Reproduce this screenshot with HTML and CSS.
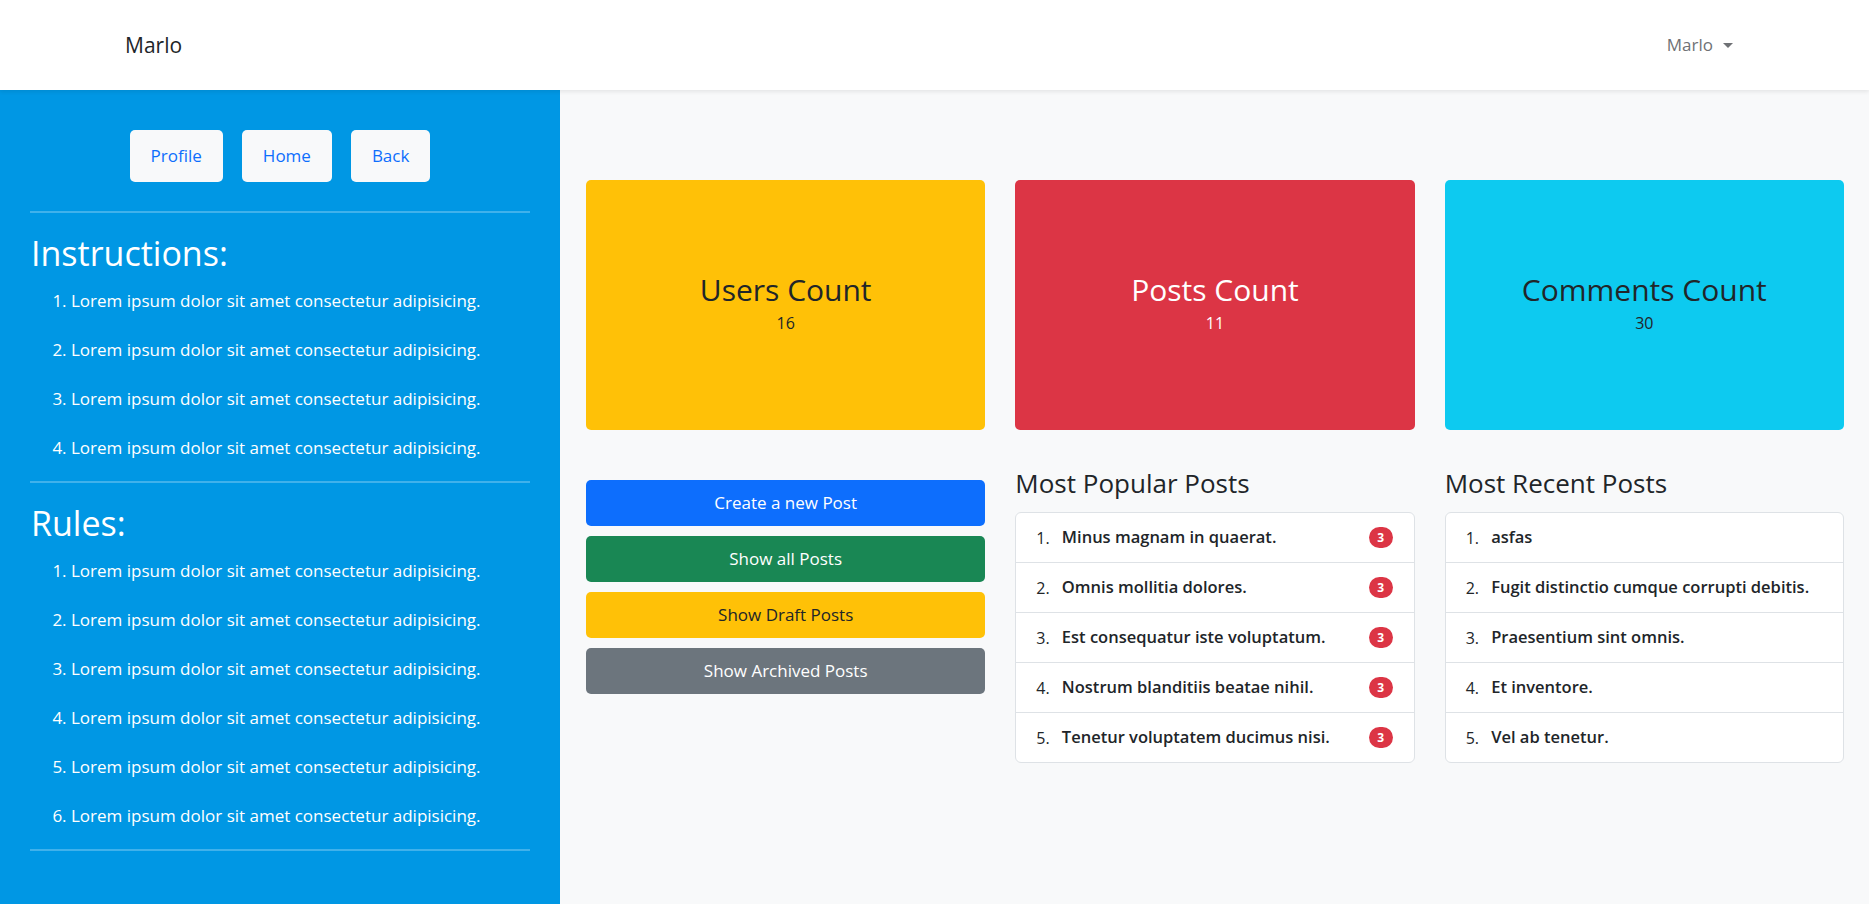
FILE: index.html
```html
<!DOCTYPE html>
<html lang="en">
<head>
<meta charset="utf-8">
<title>Marlo</title>
<link rel="stylesheet" href="styles.css">
</head>
<body>
<nav class="navbar">
  <a class="brand" href="#">Marlo</a>
  <div class="user-menu">Marlo <span class="caret"></span></div>
</nav>
<div class="layout">
  <aside class="sidebar">
    <div class="side-buttons">
      <a class="side-btn" href="#">Profile</a>
      <a class="side-btn" href="#">Home</a>
      <a class="side-btn" href="#">Back</a>
    </div>
    <hr class="side-hr">
    <h1 class="side-title">Instructions:</h1>
    <ol class="side-list">
      <li>Lorem ipsum dolor sit amet consectetur adipisicing.</li>
      <li>Lorem ipsum dolor sit amet consectetur adipisicing.</li>
      <li>Lorem ipsum dolor sit amet consectetur adipisicing.</li>
      <li>Lorem ipsum dolor sit amet consectetur adipisicing.</li>
    </ol>
    <hr class="side-hr">
    <h1 class="side-title">Rules:</h1>
    <ol class="side-list">
      <li>Lorem ipsum dolor sit amet consectetur adipisicing.</li>
      <li>Lorem ipsum dolor sit amet consectetur adipisicing.</li>
      <li>Lorem ipsum dolor sit amet consectetur adipisicing.</li>
      <li>Lorem ipsum dolor sit amet consectetur adipisicing.</li>
      <li>Lorem ipsum dolor sit amet consectetur adipisicing.</li>
      <li>Lorem ipsum dolor sit amet consectetur adipisicing.</li>
    </ol>
    <hr class="side-hr">
  </aside>
  <main class="main">
    <section class="stats">
      <div class="stat stat-yellow"><h2 class="stat-title">Users Count</h2><div class="stat-num">16</div></div>
      <div class="stat stat-red"><h2 class="stat-title">Posts Count</h2><div class="stat-num">11</div></div>
      <div class="stat stat-cyan"><h2 class="stat-title">Comments Count</h2><div class="stat-num">30</div></div>
    </section>
    <section class="lower">
      <div class="actions">
        <a class="btn btn-blue" href="#">Create a new Post</a>
        <a class="btn btn-green" href="#">Show all Posts</a>
        <a class="btn btn-yellow" href="#">Show Draft Posts</a>
        <a class="btn btn-gray" href="#">Show Archived Posts</a>
      </div>
      <div class="panel">
        <h3 class="panel-title">Most Popular Posts</h3>
        <ol class="list-group">
          <li class="item"><span class="item-text">Minus magnam in quaerat.</span><span class="badge">3</span></li>
          <li class="item"><span class="item-text">Omnis mollitia dolores.</span><span class="badge">3</span></li>
          <li class="item"><span class="item-text">Est consequatur iste voluptatum.</span><span class="badge">3</span></li>
          <li class="item"><span class="item-text">Nostrum blanditiis beatae nihil.</span><span class="badge">3</span></li>
          <li class="item"><span class="item-text">Tenetur voluptatem ducimus nisi.</span><span class="badge">3</span></li>
        </ol>
      </div>
      <div class="panel">
        <h3 class="panel-title">Most Recent Posts</h3>
        <ol class="list-group">
          <li class="item"><span class="item-text">asfas</span></li>
          <li class="item"><span class="item-text">Fugit distinctio cumque corrupti debitis.</span></li>
          <li class="item"><span class="item-text">Praesentium sint omnis.</span></li>
          <li class="item"><span class="item-text">Et inventore.</span></li>
          <li class="item"><span class="item-text">Vel ab tenetur.</span></li>
        </ol>
      </div>
    </section>
  </main>
</div>
</body>
</html>
```
FILE: styles.css
```css
* { box-sizing: border-box; }
html, body { margin: 0; padding: 0; }
body {
  font-family: "Open Sans", Lato, sans-serif;
  font-size: 17px;
  line-height: 1.5;
  color: #212529;
  background: #f8f9fa;
  min-height: 904px;
  display: flex;
  flex-direction: column;
}
a { text-decoration: none; }

.navbar {
  height: 90px;
  background: #fff;
  display: flex;
  align-items: center;
  justify-content: space-between;
  padding: 0 136px 0 125px;
  box-shadow: 0 2px 4px rgba(0,0,0,0.08);
  position: relative;
  z-index: 2;
  flex: none;
}
.brand { font-size: 21px; color: #212529; line-height: 30px; }
.user-menu { font-size: 17px; color: #6f7175; display: flex; align-items: center; gap: 10px; }
.caret {
  width: 0; height: 0;
  border-left: 5px solid transparent;
  border-right: 5px solid transparent;
  border-top: 5px solid #6f7175;
}

.layout { flex: 1; display: flex; }
.sidebar {
  width: 560px;
  flex: none;
  background: #0097e4;
  color: #fff;
  padding: 40px 30px 0 30px;
}
.side-buttons { display: flex; justify-content: center; gap: 19px; padding-bottom: 8px; }
.side-btn {
  background: #f8f9fa;
  color: #0d6efd;
  border-radius: 5px;
  padding: 14px 21px;
  line-height: 24px;
  font-size: 17px;
}
.side-hr {
  border: 0;
  border-top: 2px solid rgba(255,255,255,0.25);
  margin: 21px 0 20px;
}
.side-title { font-size: 34px; font-weight: 400; margin: 0 0 15px 1px; line-height: 1.2; }
.side-list { margin: 0; padding-left: 41px; }
.side-list li { margin-bottom: 25px; line-height: 24px; }
.side-list li:last-child { margin-bottom: 0; }

.main { flex: 1; padding: 90px 25px 0 26px; }
.stats { display: grid; grid-template-columns: repeat(3, 1fr); gap: 30px; }
.stat {
  height: 250px;
  border-radius: 5px;
  display: flex;
  flex-direction: column;
  align-items: center;
  justify-content: center;
  padding-bottom: 3px;
}
.stat-title { font-size: 30px; font-weight: 400; margin: 0 0 3px; line-height: 36px; }
.stat-num { font-size: 16px; line-height: 24px; }
.stat-yellow { background: #ffc107; color: #212529; }
.stat-red { background: #dc3545; color: #fff; }
.stat-cyan { background: #0dcaf0; color: #212529; }

.lower { display: grid; grid-template-columns: repeat(3, 1fr); gap: 30px; margin-top: 38px; }
.actions { display: flex; flex-direction: column; gap: 10px; padding-top: 12px; }
.btn {
  display: block;
  text-align: center;
  border-radius: 5px;
  padding: 11px 12px;
  line-height: 24px;
  font-size: 17px;
}
.btn-blue { background: #0d6efd; color: #fff; }
.btn-green { background: #198754; color: #fff; }
.btn-yellow { background: #ffc107; color: #212529; }
.btn-gray { background: #6c757d; color: #fff; }

.panel-title { font-size: 26px; font-weight: 400; margin: 0 0 13px; line-height: 1.2; }
.list-group {
  list-style: none;
  margin: 0;
  padding: 0;
  background: #fff;
  border: 1px solid #dee2e6;
  border-radius: 6px;
  counter-reset: item;
  font-size: 16px;
}
.item {
  counter-increment: item;
  height: 50px;
  display: flex;
  align-items: center;
  padding: 0 21px 0 20px;
  border-top: 1px solid #dee2e6;
}
.item:first-child { border-top: 0; height: 49px; }
.item::before { content: counter(item) ". "; white-space: pre; color: #212529; }
.item-text { font-weight: 600; font-size: 16.5px; margin-left: 8px; flex: 1; }
.badge {
  background: #dc3545;
  color: #fff;
  font-size: 12px;
  font-weight: 700;
  width: 24px;
  height: 21px;
  border-radius: 11px;
  display: flex;
  align-items: center;
  justify-content: center;
  line-height: 1;
}
```
